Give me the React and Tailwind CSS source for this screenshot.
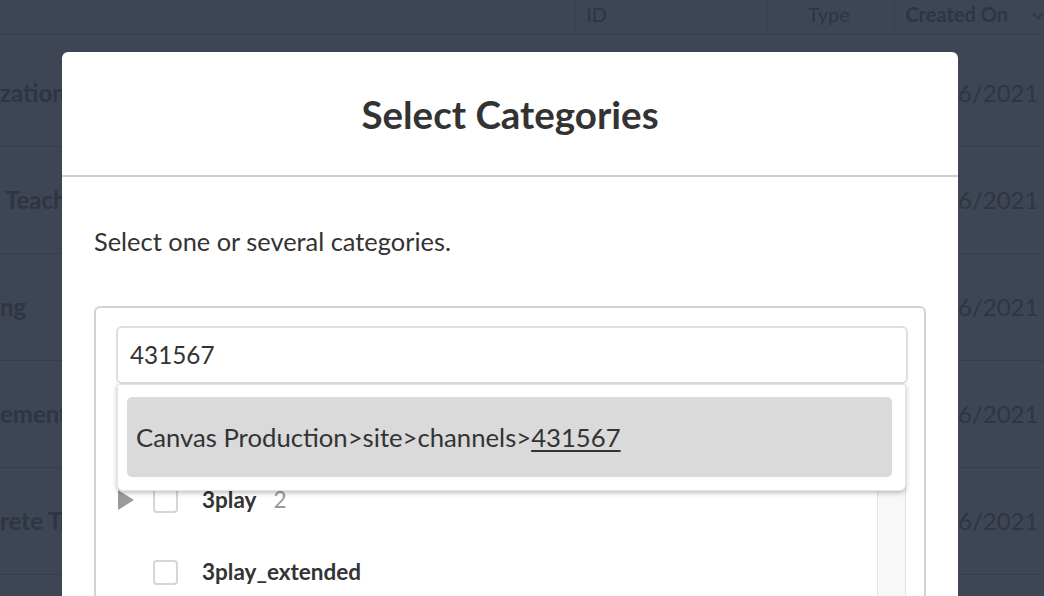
import React from "react";

const rows = [
  { name: "zation Onboarding", date: "6/2021" },
  { name: "Teacher Training", date: "6/2021", pad: true },
  { name: "ng", date: "6/2021" },
  { name: "ement Workshop", date: "6/2021" },
  { name: "rete Training", date: "6/2021" },
];

function Background() {
  return (
    <div className="flex flex-col w-full h-full bg-[#3e4655] text-[#2f3541]">
      <div className="flex h-[35px] border-b border-[#373e4b] shrink-0">
        <div className="w-[578px] border-r border-[#3a414e]" />
        <div className="w-[192px] border-r border-[#3a414e] pl-[10px] text-[20px] leading-[29px]">ID</div>
        <div className="w-[128px] border-r border-[#3a414e] pl-[40px] text-[20px] leading-[29px]">Type</div>
        <div className="flex-1 pl-[10px] flex items-start text-[20px] leading-[29px] font-bold whitespace-nowrap">
          Created On
          <svg width="12" height="10" viewBox="0 0 12 10" className="ml-[24px] mt-[11px] shrink-0">
            <path d="M1 2 L6 8 L11 2" fill="none" stroke="#2f3541" strokeWidth="1.6" />
          </svg>
        </div>
      </div>
      <div className="h-[5px]" />
      {rows.map((r, i) => (
        <div key={i} className="flex h-[107px] items-center border-b border-[#373e4b] shrink-0">
          <div className={"w-[578px] text-[24px] font-bold whitespace-nowrap " + (r.pad ? "pl-[5px]" : "")}>{r.name}</div>
          <div className="flex-1" />
          <div className="w-[86px] text-[24px]">{r.date}</div>
        </div>
      ))}
    </div>
  );
}

function Checkbox() {
  return <div className="w-[25px] h-[25px] border-2 border-[#d6d6d6] rounded-[4px] bg-white shrink-0" />;
}

export default function App() {
  return (
    <div className="relative w-[1044px] h-[596px] overflow-hidden" style={{ fontFamily: "Lato, 'Open Sans', sans-serif" }}>
      <Background />
      <div className="absolute left-[62px] top-[52px] w-[896px] h-[600px] bg-white rounded-[6px] flex flex-col text-[#333]">
        <div className="h-[125px] flex items-center justify-center border-b-2 border-[#cfcfcf] shrink-0">
          <h1 className="text-[38.5px] font-bold leading-[46px]">Select Categories</h1>
        </div>
        <div className="px-[32px] pt-[49px]">
          <p className="text-[25.4px] leading-[30px]">Select one or several categories.</p>
          <div className="relative mt-[50px] border-2 border-[#d3d3d3] rounded-[6px] pl-[20px] pr-[16px] pt-[18px] h-[400px]">
            <div className="h-[58px] border-2 border-[#dedede] rounded-[6px] flex items-center pl-[12px] text-[24.3px] text-[#333]">
              431567
            </div>
            <div className="flex">
              <div className="flex-1 flex flex-col">
                <div className="h-[80px]" />
                <div className="flex items-center h-[72px]">
                  <svg width="18" height="22" viewBox="0 0 18 22" className="ml-[1px] shrink-0">
                    <path d="M1 1 L17 11 L1 21 Z" fill="#9a9a9a" />
                  </svg>
                  <div className="ml-[18px]"><Checkbox /></div>
                  <span className="ml-[24px] text-[22.5px] font-bold text-[#333]">3play</span>
                  <span className="ml-[17px] text-[22.5px] text-[#9a9a9a]">2</span>
                </div>
                <div className="flex items-center h-[72px]">
                  <div className="ml-[37px]"><Checkbox /></div>
                  <span className="ml-[24px] text-[22.5px] font-bold text-[#333]">3play_extended</span>
                </div>
              </div>
              <div className="w-[29px] mr-[2px] bg-[#f8f8f8] border-l border-r border-[#e3e3e3] h-[300px]" />
            </div>
            <div className="absolute left-[21px] top-[76px] w-[789px] h-[107px] bg-white rounded-b-[6px] shadow-[0_2px_5px_rgba(0,0,0,0.25)] border border-[#e4e4e4] pt-[12px] pl-[9px] pr-[13px]">
              <div className="h-[80px] bg-[#dadada] rounded-[5px] flex items-center pl-[9px] text-[25.7px] text-[#333] whitespace-nowrap">
                Canvas Production&gt;site&gt;channels&gt;<span className="underline underline-offset-[3px]">431567</span>
              </div>
            </div>
          </div>
        </div>
      </div>
    </div>
  );
}
